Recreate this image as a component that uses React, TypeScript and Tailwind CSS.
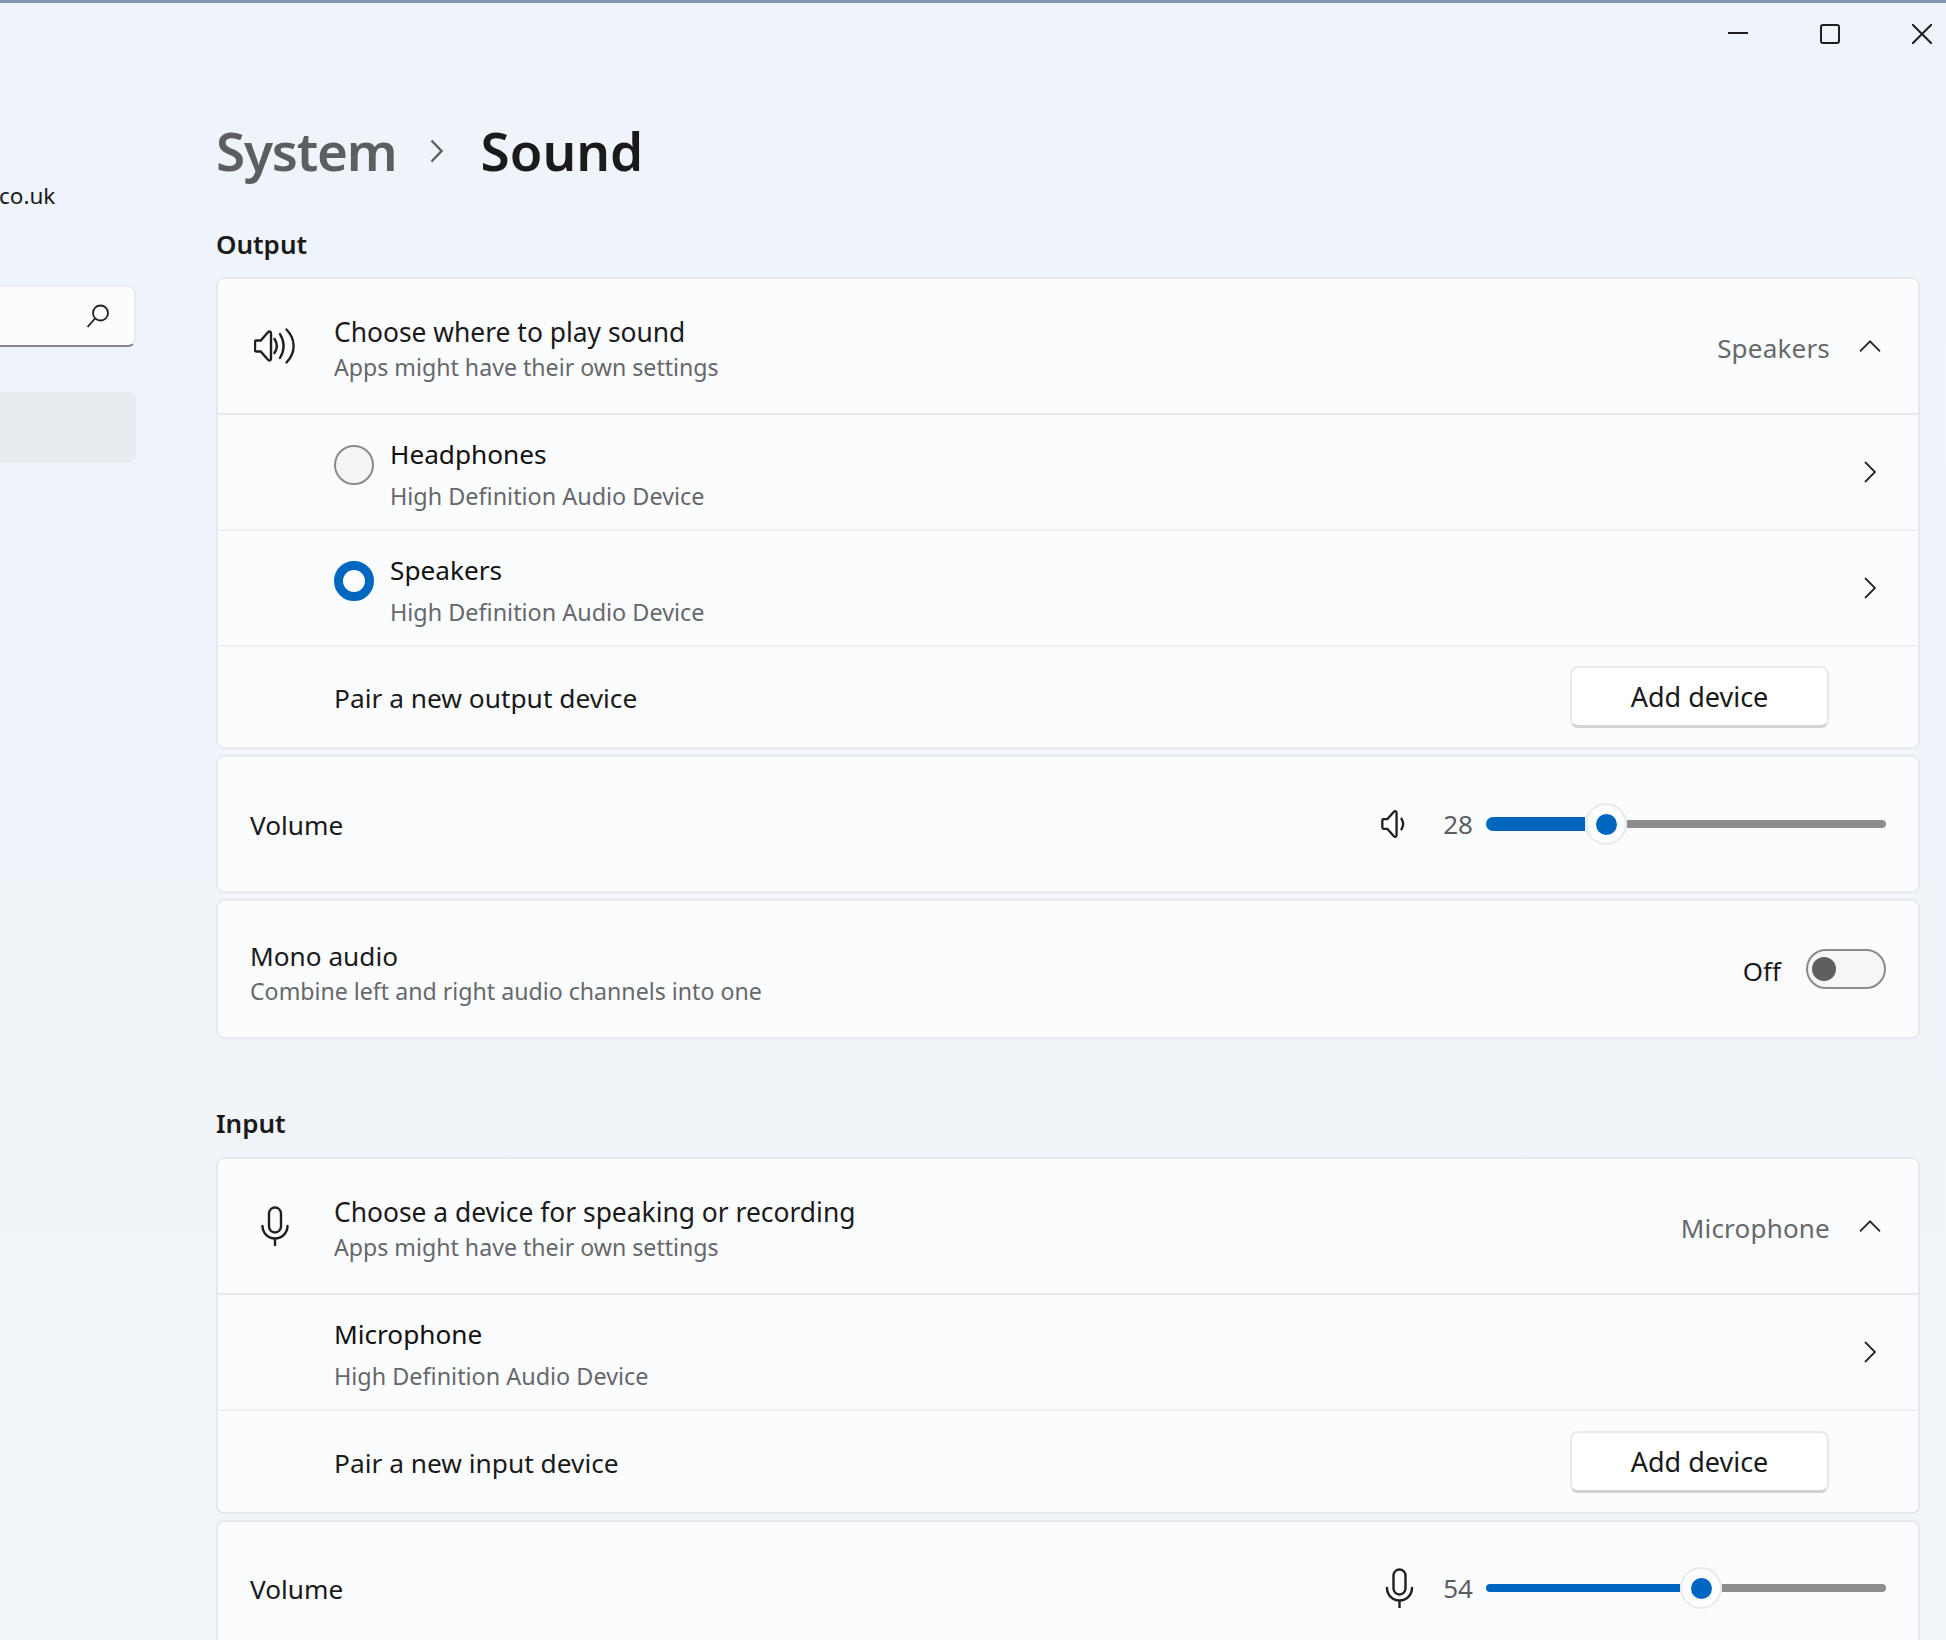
import React from "react";

const SpeakerBody = () => (
  <path d="M2.5 12.5h4.2L14 4.2c1.2-1.3 3-.5 3 1.2v25.2c0 1.7-1.800 2.500-3 1.200l-7.300-8.300H2.500c-.9 0-1.500-.6-1.500-1.500v-8c0-.9.6-1.500 1.500-1.500z" />
);

const SpeakerFull = () => (
  <svg width="41" height="36" viewBox="0 0 41 36" fill="none" stroke="#1f1f1f" strokeWidth="2.400">
    <SpeakerBody />
    <path d="M20.500 11c3 4.500 3 9.500 0 14M26 6c4.500 7.500 4.500 16.500 0 24M32.500 1.500c9.500 10 9.500 23 0 33" strokeLinecap="round" />
  </svg>
);

const SpeakerLow = () => (
  <svg className="mr-[8px]" width="26" height="32" viewBox="0 0 26 36" fill="none" stroke="#1f1f1f" strokeWidth="2.600">
    <SpeakerBody />
    <path d="M22.500 12c2.500 4 2.500 8 0 12" strokeLinecap="round" />
  </svg>
);

const Mic = ({ w, h }: { w: number; h: number }) => (
  <svg width={w} height={h} viewBox="0 0 28 40" fill="none" stroke="#1f1f1f" strokeWidth="2.400">
    <rect x="8" y="1.500" width="12" height="25" rx="6" />
    <path d="M1.500 20a12.500 12.500 0 0 0 25 0M14 32.500V40" strokeLinecap="round" />
  </svg>
);

const ChevronUp = () => (
  <svg width="22" height="12" viewBox="0 0 22 12" fill="none" stroke="#262626" strokeWidth="1.800">
    <path d="M1 11.300 11 1.300l10 10" />
  </svg>
);

const ChevronRight = () => (
  <svg width="12" height="22" viewBox="0 0 12 22" fill="none" stroke="#262626" strokeWidth="1.800">
    <path d="M1 1l10 10L1 21" />
  </svg>
);

const Device = ({ name, radio }: { name: string; radio?: "on" | "off" }) => (
  <div className="flex h-[116px] items-center border-b-2 border-[#eceef1] pl-[116px] pr-[42px]">
    {radio === "off" && (
      <div className="mb-[14px] mr-[16px] h-[40px] w-[40px] rounded-full border-2 border-[#8b8b8b] bg-[#f5f5f6]" />
    )}
    {radio === "on" && (
      <div className="mb-[14px] mr-[16px] h-[40px] w-[40px] rounded-full border-[9px] border-[#0067c0] bg-[#fdfdfe]" />
    )}
    <div className="flex-1 pt-[6px]">
      <div className="text-[26.2px] leading-[36px] text-[#111111]">{name}</div>
      <div className="mt-[6px] text-[23.4px] leading-[36px] text-[#66686b]">High Definition Audio Device</div>
    </div>
    <ChevronRight />
  </div>
);

const Header = ({ icon, title, value }: { icon: React.ReactNode; title: string; value: string }) => (
  <div className="flex h-[136px] items-center border-b-2 border-[#e6e8ec] pl-[36px] pr-[37px]">
    <div className="mr-[39px] flex w-[41px] justify-center">{icon}</div>
    <div className="flex-1 pt-[7px]">
      <div className="text-[26.4px] leading-[35px] text-[#1a1a1a]">{title}</div>
      <div className="text-[23.15px] leading-[35px] text-[#66686b]">Apps might have their own settings</div>
    </div>
    <div className="mr-[29px] pt-[4px] text-[26px] tracking-[0.2px] text-[#66686b]">{value}</div>
    <ChevronUp />
  </div>
);

const Pair = ({ label, h }: { label: string; h: string }) => (
  <div className={`flex items-center justify-between pl-[116px] pr-[89px] ${h}`}>
    <div className="pt-[4px] text-[26.3px] text-[#1a1a1a]">{label}</div>
    <div className="flex h-[62px] w-[259px] items-center justify-center rounded-[8px] border-2 border-b-[3px] border-[#e9e9ea] border-b-[#d2d2d4] bg-white pt-[2px] text-[27px] text-[#1a1a1a]">
      Add device
    </div>
  </div>
);

const Thumb = () => (
  <div className="flex h-[42px] w-[42px] shrink-0 items-center justify-center rounded-full border-2 border-[#e8e9eb] bg-[#fdfdfe]">
    <div className="h-[21px] w-[21px] rounded-full bg-[#0067c0]" />
  </div>
);

const VolumeRow = ({ icon, value, fill }: { icon: React.ReactNode; value: string; fill: string }) => (
  <div className="flex h-full items-center pl-[32px] pr-[32px]">
    <div className="flex-1 pt-[4px] text-[26.2px] text-[#1a1a1a]">Volume</div>
    {icon}
    <div className="ml-[25px] w-[34px] pt-[1px] text-right text-[26px] text-[#5c5d60]">{value}</div>
    <div className="ml-[13px] flex w-[400px] items-center">
      <div className={`rounded-l-full bg-[#0067c0] ${fill}`} />
      <Thumb />
      <div className="h-[8px] flex-1 rounded-r-full bg-[#8c8c8c]" />
    </div>
  </div>
);

export default function App() {
  return (
    <div className="h-[1640px] overflow-hidden bg-linear-to-b from-[#eff4fb] to-[#f1f4f9] font-['Noto_Sans',sans-serif]">
      <div className="h-[3px] bg-[#7f97ae]" />

      <div className="flex h-[41px] items-start justify-end pr-[14px] pt-[21px]">
        <div className="mt-[8px] h-[2px] w-[20px] bg-[#1f1f1f]" />
        <div className="ml-[72px] h-[20px] w-[20px] rounded-[3px] border-2 border-[#1f1f1f]" />
        <svg className="ml-[72px]" width="20" height="20" viewBox="0 0 20 20" stroke="#1f1f1f" strokeWidth="2">
          <path d="M0 0l20 20M20 0L0 20" />
        </svg>
      </div>

      <div className="flex">
        <aside className="w-[136px] shrink-0">
          <div className="-ml-[1px] mt-[134px] text-[22.5px] leading-[36px] text-[#1a1a1a]">co.uk</div>
          <div className="mt-[71px] flex h-[62px] w-[136px] items-center justify-end rounded-r-[8px] border-y-2 border-r-2 border-t-[#e9ebee] border-r-[#e9ebee] border-b-[#85888c] bg-[#fbfcfe] pr-[24px]">
            <svg width="24" height="24" viewBox="0 0 24 24" fill="none" stroke="#1f1f1f" strokeWidth="1.800">
              <circle cx="14.500" cy="9" r="7.500" />
              <path d="M9 14.500 1.500 23" />
            </svg>
          </div>
          <div className="mt-[45px] h-[71px] rounded-r-[8px] bg-[#e8ebef]" />
        </aside>

        <main className="ml-[80px] w-[1704px] pt-[47px]">
          <div className="flex h-[110px] items-center pt-[9px]">
            <span className="text-[53px] font-semibold tracking-[-1.2px] text-[#5c5e60]">System</span>
            <svg className="ml-[33px] mr-[38px]" width="13" height="24" viewBox="0 0 13 24" fill="none" stroke="#5c5e60" strokeWidth="2.400">
              <path d="M1.500 1.500 11.500 12l-10 10.500" />
            </svg>
            <span className="text-[53px] font-semibold text-[#1a1a1a]">Sound</span>
          </div>

          <div className="mt-[24px] h-[38px] text-[26px] font-semibold leading-[38px] text-[#1a1a1a]">Output</div>
          <div className="mt-[14px] overflow-hidden rounded-[8px] border-2 border-[#e5e8ec] bg-[#fbfcfe]">
            <Header icon={<SpeakerFull />} title="Choose where to play sound" value="Speakers" />
            <Device name="Headphones" radio="off" />
            <Device name="Speakers" radio="on" />
            <Pair label="Pair a new output device" h="h-[100px]" />
          </div>

          <div className="mt-[6px] h-[138px] rounded-[8px] border-2 border-[#e5e8ec] bg-[#fbfcfe]">
            <VolumeRow icon={<SpeakerLow />} value="28" fill="h-[14px] w-[99px]" />
          </div>

          <div className="mt-[6px] flex h-[140px] items-center justify-between rounded-[8px] border-2 border-[#e5e8ec] bg-[#fbfcfe] pl-[32px] pr-[32px]">
            <div className="pt-[8px]">
              <div className="text-[26.2px] leading-[35px] text-[#1a1a1a]">Mono audio</div>
              <div className="text-[23.15px] leading-[34px] text-[#66686b]">Combine left and right audio channels into one</div>
            </div>
            <div className="flex items-center">
              <span className="mr-[25px] pt-[5px] text-[26px] text-[#1a1a1a]">Off</span>
              <div className="flex h-[40px] w-[80px] items-center rounded-full border-2 border-[#8b8b8b] bg-[#f6f6f8] pl-[4px]">
                <div className="h-[24px] w-[24px] rounded-full bg-[#5f5f5f]" />
              </div>
            </div>
          </div>

          <div className="mt-[65px] h-[38px] text-[26px] font-semibold leading-[38px] text-[#1a1a1a]">Input</div>
          <div className="mt-[15px] overflow-hidden rounded-[8px] border-2 border-[#e5e8ec] bg-[#fbfcfe]">
            <Header icon={<Mic w={28} h={40} />} title="Choose a device for speaking or recording" value="Microphone" />
            <Device name="Microphone" />
            <Pair label="Pair a new input device" h="h-[101px]" />
          </div>

          <div className="mt-[6px] h-[136px] rounded-[8px] border-2 border-[#e5e8ec] bg-[#fbfcfe]">
            <VolumeRow icon={<Mic w={29} h={40} />} value="54" fill="h-[8px] w-[194px]" />
          </div>
        </main>
      </div>
    </div>
  );
}
